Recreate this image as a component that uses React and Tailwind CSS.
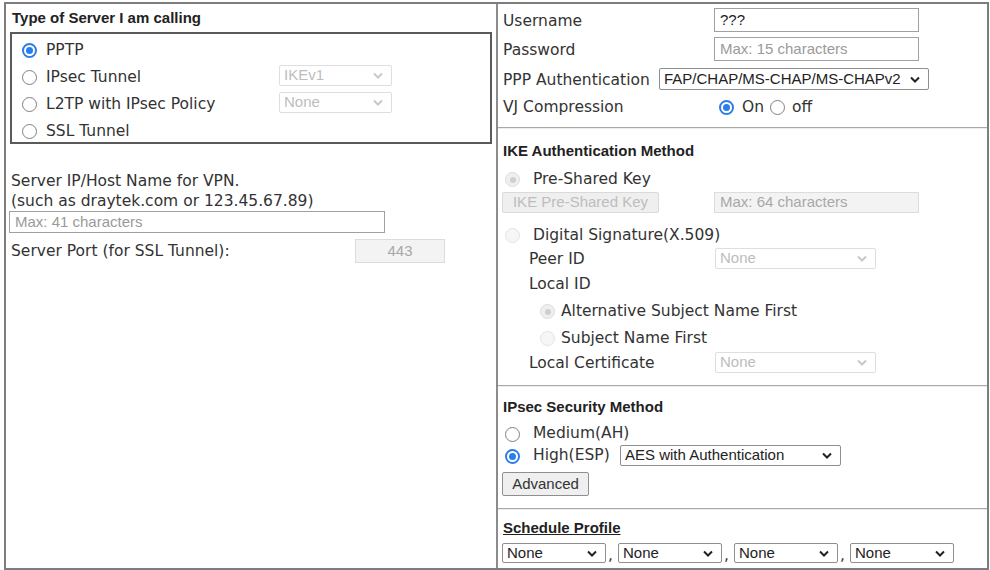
import React from 'react';

const sans = "font-['DejaVu_Sans',Verdana,sans-serif]";
const arial = "font-['Liberation_Sans',Arial,sans-serif]";

function Chevron({ disabled }) {
  return (
    <svg width="10" height="7" viewBox="0 0 10 7" className="shrink-0">
      <path d="M1 1.5 L5 5.5 L9 1.5" fill="none" stroke={disabled ? '#c8c8c8' : '#222'} strokeWidth="2" />
    </svg>
  );
}

function Radio({ checked, disabled }) {
  if (checked && !disabled) {
    return (
      <span className="mt-[3px] shrink-0 w-[15px] h-[15px] rounded-full border-2 border-[#2b7de9] bg-white flex items-center justify-center">
        <span className="block w-[7px] h-[7px] rounded-full bg-[#2b7de9]" />
      </span>
    );
  }
  if (checked && disabled) {
    return (
      <span className="mt-[3px] shrink-0 w-[15px] h-[15px] rounded-full border border-[#dcdcdc] bg-[#efefef] flex items-center justify-center">
        <span className="block w-[6px] h-[6px] rounded-full bg-[#cfcfcf]" />
      </span>
    );
  }
  if (disabled) {
    return <span className="mt-[3px] block shrink-0 w-[15px] h-[15px] rounded-full border border-[#e3e3e3] bg-[#f6f6f6]" />;
  }
  return <span className="mt-[3px] block shrink-0 w-[15px] h-[15px] rounded-full border border-[#808080] bg-white" />;
}

function Select({ value, className, disabled }) {
  return (
    <div
      className={`${arial} ${className} flex items-center justify-between pl-[4px] pr-[8px] text-[15px] rounded-[2px] border ${
        disabled ? 'border-[#dedede] bg-white text-[#bdbdbd]' : 'border-[#8f8f8f] bg-white text-[#222]'
      }`}
    >
      <span className="whitespace-nowrap">{value}</span>
      <Chevron disabled={disabled} />
    </div>
  );
}

function Field({ value, placeholder, className, disabled }) {
  return (
    <div
      className={`${arial} ${className} flex items-center px-[5px] text-[15px] border ${
        disabled ? 'border-[#dcdcdc] bg-[#f3f3f3] text-[#a8a8a8]' : 'border-[#a0a0a0] bg-white text-[#222]'
      }`}
    >
      {value ? <span>{value}</span> : <span className="text-[#9a9a9a]">{placeholder}</span>}
    </div>
  );
}

function Divider({ className }) {
  return <div className={`h-[2px] border-t border-[#a9a9a9] border-b border-b-[#ececec] ${className}`} />;
}

export default function App() {
  const serverTypes = [
    { label: 'PPTP', checked: true },
    { label: 'IPsec Tunnel', select: 'IKEv1' },
    { label: 'L2TP with IPsec Policy', select: 'None' },
    { label: 'SSL Tunnel' },
  ];

  return (
    <div className={`w-[990px] h-[570px] bg-white pt-[2px] pl-[4px] text-[15.5px] text-[#333] ${sans}`}>
      <div className="flex w-[985px] h-[568px] border-2 border-[#7d7d7d]">
        {/* left column */}
        <div className="w-[490px] shrink-0">
          <div className={`h-[28px] flex items-center pl-[6px] text-[15px] font-bold text-[#222] ${arial}`}>
            Type of Server I am calling
          </div>
          <div className="ml-[4px] w-[482px] h-[112px] border-2 border-[#5a5a5a] pt-[1px]">
            {serverTypes.map((t) => (
              <div key={t.label} className="h-[27px] flex items-center">
                <span className="ml-[10px]">
                  <Radio checked={t.checked} />
                </span>
                <span className="ml-[9px] pt-[4px] w-[233px] whitespace-nowrap">{t.label}</span>
                {t.select && <Select value={t.select} disabled className="w-[113px] h-[21px]" />}
              </div>
            ))}
          </div>

          <div className="mt-[27px] pl-[5px] leading-[20px]">
            <div>Server IP/Host Name for VPN.</div>
            <div>(such as draytek.com or 123.45.67.89)</div>
          </div>
          <Field placeholder="Max: 41 characters" className="ml-[3px] w-[376px] h-[22px]" />
          <div className="mt-[4px] h-[28px] flex items-center">
            <span className="pl-[5px] pt-[2px] w-[349px]">Server Port (for SSL Tunnel):</span>
            <Field value="443" disabled className="w-[90px] h-[24px] justify-center" />
          </div>
        </div>

        {/* right column */}
        <div className="flex-1 border-l-2 border-[#8c8c8c]">
          <div className="mt-[4px] h-[24px] flex items-center px-[5px]">
            <span className="w-[211px] pt-[4px]">Username</span>
            <Field value="???" className="w-[205px] h-[24px]" />
          </div>
          <div className="mt-[5px] h-[24px] flex items-center px-[5px]">
            <span className="w-[211px] pt-[4px]">Password</span>
            <Field placeholder="Max: 15 characters" className="w-[205px] h-[24px]" />
          </div>
          <div className="mt-[6px] h-[24px] flex items-center px-[5px]">
            <span className="w-[156px] pt-[4px] whitespace-nowrap">PPP Authentication</span>
            <Select value="FAP/CHAP/MS-CHAP/MS-CHAPv2" className="w-[270px] h-[22px]" />
          </div>
          <div className="mt-[3px] h-[24px] flex items-center px-[5px]">
            <span className="w-[216px] pt-[4px]">VJ Compression</span>
            <Radio checked />
            <span className="ml-[8px] pt-[4px]">On</span>
            <span className="ml-[6px]">
              <Radio />
            </span>
            <span className="ml-[7px] pt-[4px]">off</span>
          </div>

          <Divider className="mt-[9px]" />

          <div className={`mt-[10px] h-[24px] flex items-center px-[5px] text-[15px] font-bold text-[#222] ${arial}`}>
            IKE Authentication Method
          </div>
          <div className="mt-[3px] h-[24px] flex items-center px-[5px]">
            <span className="ml-[2px]">
              <Radio checked disabled />
            </span>
            <span className="ml-[13px] pt-[4px]">Pre-Shared Key</span>
          </div>
          <div className="mt-[2px] h-[21px] flex items-center pl-[4px]">
            <div
              className={`${arial} w-[157px] h-[21px] flex items-center justify-center text-[15px] text-[#bdbdbd] bg-[#efefef] border border-[#dadada] rounded-[2px]`}
            >
              IKE Pre-Shared Key
            </div>
            <Field value="Max: 64 characters" disabled className="ml-[55px] w-[205px] h-[21px]" />
          </div>
          <div className="mt-[9px] h-[24px] flex items-center px-[5px]">
            <span className="ml-[2px]">
              <Radio disabled />
            </span>
            <span className="ml-[13px] pt-[4px]">Digital Signature(X.509)</span>
          </div>
          <div className="h-[24px] flex items-center px-[5px]">
            <span className="ml-[26px] pt-[4px] w-[186px]">Peer ID</span>
            <Select value="None" disabled className="w-[161px] h-[21px]" />
          </div>
          <div className="mt-[1px] h-[24px] flex items-center px-[5px]">
            <span className="ml-[26px] pt-[4px]">Local ID</span>
          </div>
          <div className="mt-[3px] h-[24px] flex items-center px-[5px]">
            <span className="ml-[37px]">
              <Radio checked disabled />
            </span>
            <span className="ml-[6px] pt-[4px]">Alternative Subject Name First</span>
          </div>
          <div className="mt-[3px] h-[24px] flex items-center px-[5px]">
            <span className="ml-[37px]">
              <Radio disabled />
            </span>
            <span className="ml-[6px] pt-[4px]">Subject Name First</span>
          </div>
          <div className="mt-[1px] h-[24px] flex items-center px-[5px]">
            <span className="ml-[26px] pt-[4px] w-[186px]">Local Certificate</span>
            <Select value="None" disabled className="w-[161px] h-[21px]" />
          </div>

          <Divider className="mt-[11px]" />

          <div className={`mt-[8px] h-[24px] flex items-center px-[5px] text-[15px] font-bold text-[#222] ${arial}`}>
            IPsec Security Method
          </div>
          <div className="mt-[3px] h-[22px] flex items-center px-[5px]">
            <span className="ml-[2px]">
              <Radio />
            </span>
            <span className="ml-[13px] pt-[2px]">Medium(AH)</span>
          </div>
          <div className="h-[22px] flex items-center px-[5px]">
            <span className="ml-[2px]">
              <Radio checked />
            </span>
            <span className="ml-[13px] pt-[2px] w-[87px] whitespace-nowrap">High(ESP)</span>
            <Select value="AES with Authentication" className="w-[221px] h-[21px]" />
          </div>
          <div className="mt-[6px] h-[24px] flex items-center pl-[4px]">
            <div
              className={`${arial} w-[87px] h-[24px] flex items-center justify-center text-[15px] text-[#333] bg-[#efefef] border border-[#8f8f8f] rounded-[2px]`}
            >
              Advanced
            </div>
          </div>

          <Divider className="mt-[12px]" />

          <div className={`mt-[7px] h-[22px] flex items-center px-[5px] text-[15px] font-bold underline text-[#222] ${arial}`}>
            Schedule Profile
          </div>
          <div className="mt-[4px] h-[20px] flex items-center pl-[4px]">
            {[0, 1, 2, 3].map((i) => (
              <React.Fragment key={i}>
                {i > 0 && <span className="w-[12px] pl-[2px] leading-none self-end">,</span>}
                <Select value="None" className="w-[104px] h-[20px]" />
              </React.Fragment>
            ))}
          </div>
        </div>
      </div>
    </div>
  );
}
